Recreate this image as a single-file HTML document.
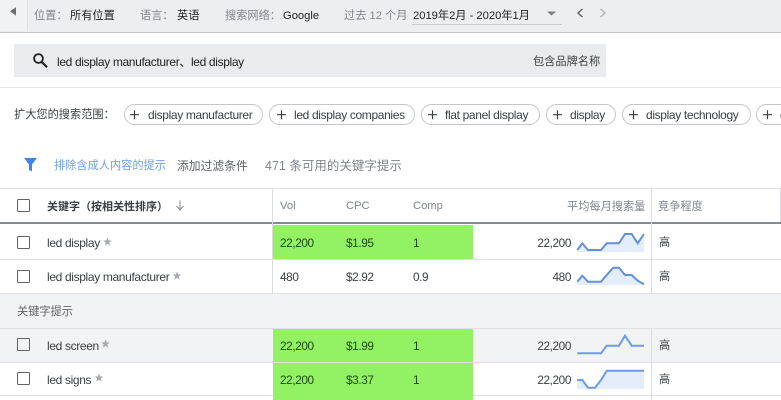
<!DOCTYPE html>
<html>
<head>
<meta charset="utf-8">
<style>
html,body{margin:0;padding:0;background:#fff}
#p{position:relative;width:781px;height:400px;overflow:hidden;background:#fff;font-family:"Liberation Sans","Noto Sans CJK SC",sans-serif;font-size:11.2px;color:#3c4043;filter:blur(.35px)}
#p div{position:absolute;white-space:nowrap}
.t{line-height:16px;height:16px}
.l{font-size:12px;letter-spacing:-.35px}
.n{font-size:11.8px;letter-spacing:-.4px}
.g{color:#80868b}
.k{color:#202124}
.chip{top:104px;height:19px;border:1px solid #c4c6c9;border-radius:11px;background:#fff}
.cb{width:11px;height:11px;border:1.5px solid #5f6368;border-radius:1.5px;left:17px;background:transparent}
.h{left:0;height:1px;background:#dfe1e5}
.gr{left:273px;width:200px;background:#92f263}
.v{background:#dadce0;width:1px}
.gt{color:#1f4a12}
.r{right:210px}
svg{position:absolute;left:0;top:0}
</style>
</head>
<body>
<div id="p">
<div style="left:0;top:0;width:781px;height:32px;background:#eceef1"></div>
<div style="left:0;top:32px;width:781px;height:1px;background:#c6c7c9"></div>
<div style="left:0;top:0;width:27px;height:31px;background:#f1f2f4;border-right:1px solid #e2e3e5"></div>
<div class="t g" style="left:34px;top:8px">位置：</div>
<div class="t k" style="left:70px;top:8px">所有位置</div>
<div class="t g" style="left:140px;top:8px">语言：</div>
<div class="t k" style="left:177px;top:8px">英语</div>
<div class="t g" style="left:225px;top:8px">搜索网络：</div>
<div class="t k" style="left:283px;top:8px">Google</div>
<div class="t g" style="left:344px;top:8px">过去 12 个月</div>
<div class="t k" style="left:413px;top:8px">2019年2月 - 2020年1月</div>
<div style="left:412px;top:24px;width:150px;height:1px;background:#c9cbce"></div>

<div style="left:14px;top:44px;width:592px;height:33px;background:#e9ebee"></div>
<div class="t k l" style="left:57px;top:54px">led display manufacturer、led display</div>
<div class="t" style="left:533px;top:54px">包含品牌名称</div>
<div style="left:0;top:87px;width:781px;height:1px;background:#e3e4e6"></div>

<div class="t" style="left:14px;top:107px">扩大您的搜索范围：</div>
<div class="chip" style="left:124px;width:137px"></div>
<div class="chip" style="left:269px;width:144px"></div>
<div class="chip" style="left:421px;width:117px"></div>
<div class="chip" style="left:546px;width:68px"></div>
<div class="chip" style="left:622px;width:127px"></div>
<div class="chip" style="left:756px;width:60px"></div>
<div class="t l" style="left:148px;top:107px">display manufacturer</div>
<div class="t l" style="left:294px;top:107px">led display companies</div>
<div class="t l" style="left:445px;top:107px">flat panel display</div>
<div class="t l" style="left:570px;top:107px">display</div>
<div class="t l" style="left:646px;top:107px">display technology</div>
<div class="t l" style="left:780px;top:107px">display</div>

<div class="t" style="left:54px;top:158px;color:#6f9fe8">排除含成人内容的提示</div>
<div class="t" style="left:177px;top:158px;color:#5f6368;font-size:11.8px">添加过滤条件</div>
<div class="t g" style="left:265px;top:158px;font-size:12.5px">471 条可用的关键字提示</div>

<div class="h" style="top:188px;width:781px"></div>
<div style="left:0;top:222px;width:781px;height:2px;background:#85888c"></div>
<div class="h" style="top:259px;width:781px"></div>
<div class="h" style="top:293px;width:781px"></div>
<div style="left:0;top:294px;width:781px;height:68px;background:#f1f3f4"></div>
<div class="h" style="top:328px;width:781px"></div>
<div class="h" style="top:362px;width:781px"></div>
<div class="h" style="top:395px;width:781px"></div>

<div class="gr" style="top:225px;height:34px"></div>
<div class="gr" style="top:329px;height:33px"></div>
<div class="gr" style="top:363px;height:37px"></div>

<div class="v" style="left:272px;top:189px;height:104px"></div>
<div class="v" style="left:651px;top:189px;height:104px"></div>
<div class="v" style="left:780px;top:189px;height:33px"></div>
<div class="v" style="left:651px;top:329px;height:71px"></div>

<div class="cb" style="top:199px"></div>
<div class="cb" style="top:236px"></div>
<div class="cb" style="top:270px"></div>
<div class="cb" style="top:338px"></div>
<div class="cb" style="top:372px"></div>

<div class="t" style="left:47px;top:199px;font-weight:bold;font-size:11px;color:#3c4043">关键字（按相关性排序）</div>
<div class="t g" style="left:280px;top:198px">Vol</div>
<div class="t g" style="left:346px;top:198px">CPC</div>
<div class="t g" style="left:413px;top:198px">Comp</div>
<div class="t g" style="left:567px;top:199px">平均每月搜索量</div>
<div class="t g" style="left:658px;top:199px">竞争程度</div>

<div class="t l" style="left:47px;top:235px">led display</div>
<div class="t l" style="left:47px;top:269px">led display manufacturer</div>
<div class="t" style="left:17px;top:304px;color:#5f6368">关键字提示</div>
<div class="t l" style="left:47px;top:338px">led screen</div>
<div class="t l" style="left:47px;top:372px">led signs</div>

<div class="t gt n" style="left:280px;top:235px">22,200</div><div class="t gt n" style="left:346px;top:235px">$1.95</div><div class="t gt n" style="left:413px;top:235px">1</div>
<div class="t n" style="left:280px;top:269px">480</div><div class="t n" style="left:346px;top:269px">$2.92</div><div class="t n" style="left:413px;top:269px">0.9</div>
<div class="t gt n" style="left:280px;top:338px">22,200</div><div class="t gt n" style="left:346px;top:338px">$1.99</div><div class="t gt n" style="left:413px;top:338px">1</div>
<div class="t gt n" style="left:280px;top:372px">22,200</div><div class="t gt n" style="left:346px;top:372px">$3.37</div><div class="t gt n" style="left:413px;top:372px">1</div>

<div class="t r n" style="top:235px">22,200</div>
<div class="t r n" style="top:269px">480</div>
<div class="t r n" style="top:338px">22,200</div>
<div class="t r n" style="top:372px">22,200</div>
<div class="t" style="left:659px;top:235px">高</div>
<div class="t" style="left:659px;top:269px">高</div>
<div class="t" style="left:659px;top:338px">高</div>
<div class="t" style="left:659px;top:372px">高</div>

<svg width="781" height="400" viewBox="0 0 781 400" fill="none">
<path d="M10 11.2L16 7.2v8.4z" fill="#6b6f73"/>
<path d="M547 11.5h9l-4.5 4z" fill="#7b7f84"/>
<path d="M582.5 9L578 13l4.5 4" stroke="#5f6368" stroke-width="1.5"/>
<path d="M600.5 9l4.5 4-4.5 4" stroke="#b3b6ba" stroke-width="1.5"/>
<circle cx="38.5" cy="58.5" r="4.4" stroke="#202124" stroke-width="1.8"/>
<path d="M41.8 62l5.2 5.2" stroke="#202124" stroke-width="2.2"/>
<path d="M130 114.7h9M134.5 110.2v9M277 114.7h9M281.5 110.2v9M428 114.7h9M432.5 110.2v9M553 114.7h9M557.5 110.2v9M629 114.7h9M633.5 110.2v9M763 114.7h9M767.5 110.2v9" stroke="#3c4043" stroke-width="1.2"/>
<path d="M24 158h13l-5 6.5v7l-3-1.5v-5.5z" fill="#3f86e8"/>
<path d="M180 200.5v9M176.5 206l3.5 3.8 3.5-3.8" stroke="#80868b" stroke-width="1"/>
<g fill="#a6a9ad">
<path d="M107.5 237.5l1.2 3h3.2l-2.6 2 .9 3.2-2.7-1.9-2.7 1.9.9-3.2-2.6-2h3.2z"/>
<path d="M177 271.5l1.2 3h3.2l-2.6 2 .9 3.2-2.7-1.9-2.7 1.9.9-3.2-2.6-2h3.2z"/>
<path d="M105.5 339.5l1.2 3h3.2l-2.6 2 .9 3.2-2.7-1.9-2.7 1.9.9-3.2-2.6-2h3.2z"/>
<path d="M99 373.5l1.2 3h3.2l-2.6 2 .9 3.2-2.7-1.9-2.7 1.9.9-3.2-2.6-2h3.2z"/>
</g>
<g fill="#e4edfa">
<path d="M577.3 250L582.3 243.3 588 250H601L606.7 243.3H619L625 234H631.7L637.7 243.3 644 234V252H577.3z"/>
<path d="M577.3 281.7L582.3 275.7 588 281.7H601L606.7 275 613.3 267.7H619L625 275H631.7L637.7 280.7 644 284.3V285H577.3z"/>
<path d="M577.3 380H582.3L588 387.7H595L601 380 606.7 370.7H644V389H577.3z"/>
</g>
<g stroke="#6490d8" stroke-width="2" fill="none">
<path d="M577.3 250L582.3 243.3 588 250H601L606.7 243.3H619L625 234H631.7L637.7 243.3 644 234"/>
<path d="M577.3 281.7L582.3 275.7 588 281.7H601L606.7 275 613.3 267.7H619L625 275H631.7L637.7 280.7 644 284.3"/>
<path d="M577.3 353.3H601L606.7 345.7H619L625 335.7 631.7 345.7H644" stroke="#6f9ae6"/>
<path d="M577.3 380H582.3L588 387.7H595L601 380 606.7 370.7H644" stroke="#6f9ae6"/>
</g>
</svg>
</div>
</body>
</html>
